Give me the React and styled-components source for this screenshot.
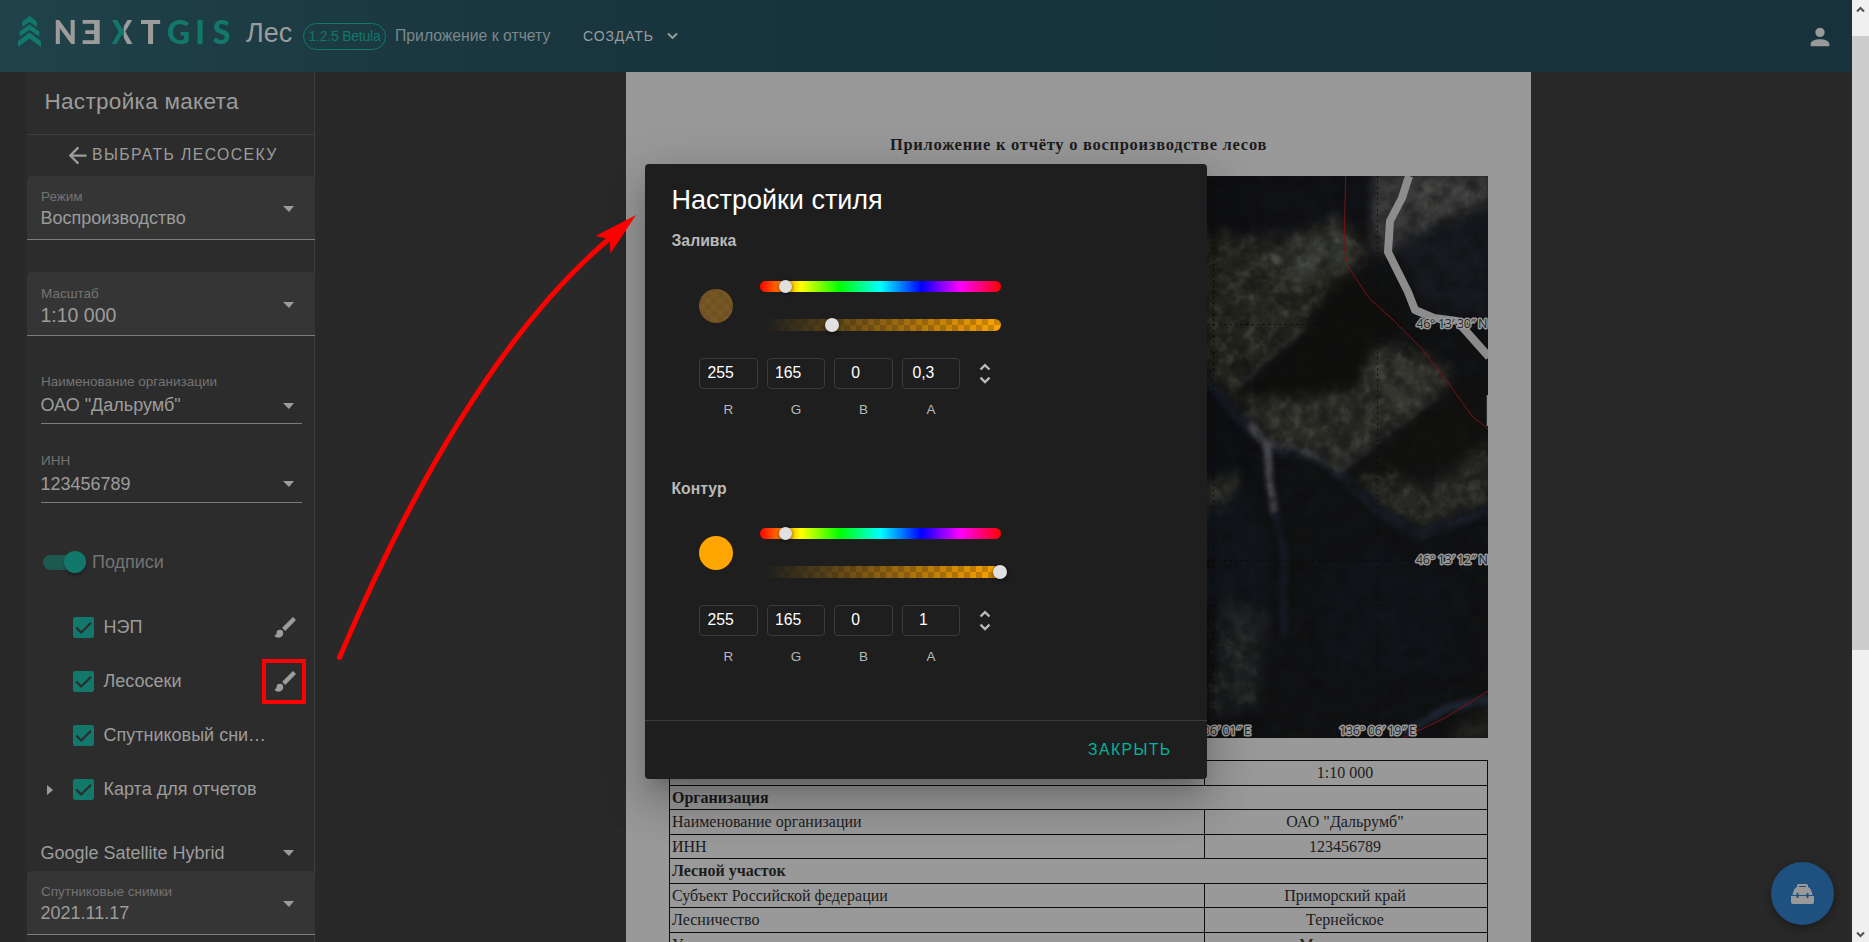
import React from 'react';
import styled, { createGlobalStyle } from 'styled-components';

const c = {
  teal: '#11786b',
  text: '#9c9c9c',
  muted: '#737373',
  bg: '#292929',
  panel: '#2c2c2c',
  line: '#3d3d3d',
  dialog: '#1e1e1e',
};

const GlobalStyle = createGlobalStyle`
  * { box-sizing: border-box; }
  body { margin: 0; overflow: hidden; background: ${c.bg}; font-family: "Liberation Sans", Arial, sans-serif; }
`;

const Window = styled.div`
  position: relative;
  display: flex;
  width: 1869px;
  height: 942px;
  overflow: hidden;
`;
const Main = styled.div`
  flex: 1;
  display: flex;
  flex-direction: column;
  min-width: 0;
`;

/* App bar */
const Bar = styled.header`
  flex: none;
  height: 72px;
  display: flex;
  align-items: flex-start;
  background: linear-gradient(90deg, #204249 0, #1b3840 420px, #16323a 900px, #17323a 100%);
`;
const LogoMark = styled.svg`
  flex: none;
  width: 23px;
  height: 31px;
  margin: 16px 0 0 18px;
`;
const Wordmark = styled.div`
  display: flex;
  margin: 11px 0 0 12px;
  height: 41px;
  font: 900 32px/41px Lato, sans-serif;
`;
const Letter = styled.span`
  display: block;
  width: ${(p) => p.$w}px;
  text-align: center;
  color: ${(p) => p.$color};
  transform: scaleX(${(p) => p.$sx || 1});
  ${(p) => p.$split && `
    background: linear-gradient(90deg, ${c.teal} 58%, ${c.text} 58%);
    background-clip: text;
    -webkit-background-clip: text;
    color: transparent;
  `}
`;
const Product = styled.div`
  margin: 13px 0 0 11px;
  width: 46px;
  font-size: 27px;
  line-height: 40px;
  color: ${c.text};
`;
const Version = styled.div`
  margin: 23px 0 0 11px;
  width: 83px;
  height: 27px;
  border: 1px solid ${c.teal};
  border-radius: 14px;
  font-size: 14px;
  letter-spacing: -0.22px;
  line-height: 24px;
  text-align: center;
  color: ${c.teal};
`;
const Subtitle = styled.div`
  margin: 23px 0 0 9px;
  width: 156px;
  white-space: nowrap;
  font-size: 15.75px;
  line-height: 26px;
  color: #7c888b;
`;
const BarButton = styled.div`
  display: flex;
  align-items: center;
  margin: 23px 0 0 32px;
  height: 26px;
  gap: 13px;
  font-size: 14px;
  letter-spacing: 0.9px;
  color: ${c.text};
`;
const Account = styled.svg`
  width: 28px;
  height: 28px;
  margin: 22.5px 18px 0 auto;
  fill: #999;
`;

/* Body */
const Body = styled.div`
  flex: 1;
  display: flex;
  min-height: 0;
`;
const Side = styled.aside`
  flex: none;
  width: 288px;
  margin-left: 27px;
  display: flex;
  flex-direction: column;
  background: ${c.panel};
  border-right: 1px solid ${c.line};
`;
const SideTitle = styled.div`
  flex: none;
  height: 63px;
  padding: 0 0 1px 17.5px;
  border-bottom: 1px solid ${c.line};
  font-size: 22.5px;
  line-height: 60px;
  letter-spacing: 0.3px;
  color: ${c.text};
`;
const BackButton = styled.div`
  flex: none;
  height: 41px;
  display: flex;
  align-items: center;
  padding: 0 0 2px 37px;
  font-size: 15.75px;
  letter-spacing: 1.4px;
  color: ${c.text};
  svg { width: 27px; height: 27px; margin: 2px 1px 0 0; fill: currentColor; }
`;
const FieldBox = styled.div`
  flex: none;
  position: relative;
  height: ${(p) => (p.$filled ? 64 : p.$bare ? 31 : 63)}px;
  margin: ${(p) => p.$mt || 0}px ${(p) => (p.$filled ? -1 : 12)}px 0 ${(p) => (p.$filled ? 0 : 14)}px;
  padding: ${(p) => (p.$bare ? 0 : 12 + (p.$drop || 0))}px 0 0 ${(p) => (p.$filled ? 14 : 0)}px;
  background: ${(p) => (p.$filled ? '#353535' : 'transparent')};
  border-radius: ${(p) => (p.$filled ? '4px 4px 0 0' : 0)};
  border-bottom: 1px solid #7c7c7c;
`;
const FieldLabel = styled.div`
  height: ${(p) => (p.$filled ? 18 : 20)}px;
  font-size: 13.5px;
  line-height: 18px;
  color: ${c.muted};
`;
const FieldValue = styled.div`
  margin-left: -0.5px;
  font-size: ${(p) => p.$size || 18}px;
  line-height: 24px;
  white-space: nowrap;
  color: ${c.text};
`;
const Caret = styled.i`
  position: absolute;
  right: ${(p) => (p.$filled ? 21 : 8)}px;
  top: ${(p) => p.$y}px;
  border: solid transparent;
  border-width: 6px 5.5px 0 6px;
  border-top-color: ${c.text};
`;
const SwitchRow = styled.div`
  flex: none;
  display: flex;
  align-items: center;
  height: 46px;
  margin: 36px 0 16px;
  padding-left: 16px;
  gap: 12px;
  font-size: 18px;
  color: ${c.muted};
`;
const Track = styled.div`
  display: flex;
  align-items: center;
  justify-content: flex-end;
  width: 37px;
  height: 15px;
  background: #1d5951;
  border-radius: 8px;
`;
const Thumb = styled.div`
  flex: none;
  width: 22px;
  height: 22px;
  margin-right: -6px;
  border-radius: 50%;
  background: ${c.teal};
  box-shadow: 0 3px 3px rgba(0, 0, 0, 0.25);
`;
const TreeRow = styled.div`
  flex: none;
  display: flex;
  align-items: center;
  height: 54px;
  padding-left: 20px;
  color: ${c.text};
`;
const Expander = styled.div`
  width: 26px;
  &::before {
    content: '';
    display: block;
    width: 0;
    border: solid transparent;
    border-width: 5.5px 0 5.5px 6px;
    border-left-color: ${(p) => (p.$shown ? c.text : 'transparent')};
  }
`;
const Check = styled.svg`
  width: 21px;
  height: 21px;
  margin-bottom: 1px;
`;
const TreeLabel = styled.div`
  margin-left: 9.5px;
  width: 166.5px;
  padding-bottom: 3px;
  font-size: 18px;
  line-height: 24px;
  white-space: nowrap;
`;
const BrushSlot = styled.div`
  width: 44px;
  height: 45px;
  display: flex;
  align-items: center;
  justify-content: center;
  margin: -2px 0 0 -8px;
  border: 4px solid ${(p) => (p.$marked ? '#f00' : 'transparent')};
  svg { flex: none; width: 27px; height: 27px; margin-left: 2px; fill: ${c.text}; }
`;

/* Report sheet */
const Stage = styled.main`
  flex: 1;
  padding-left: 311px;
  overflow: hidden;
`;
const Sheet = styled.article`
  width: 905px;
  height: 1200px;
  padding: 0 43px;
  background: #999;
  color: #1c1c1c;
  font-family: "Liberation Serif", "Times New Roman", serif;
`;
const SheetTitle = styled.h1`
  margin: 0;
  height: 104px;
  padding-top: 61px;
  font-size: 16.5px;
  line-height: 24px;
  letter-spacing: 0.72px;
  text-align: center;
`;
const Map = styled.svg`
  display: block;
  width: 819px;
  height: 562px;
`;
const Table = styled.div`
  margin-top: 22px;
  border: 1px solid #0c0c0c;
  border-bottom: 0;
`;
const TRow = styled.div`
  display: flex;
  height: 24.57px;
  border-bottom: 1px solid #0c0c0c;
  font-size: 16px;
  line-height: ${(p) => (p.$head ? 24.2 : 23.5)}px;
  font-weight: ${(p) => (p.$head ? 700 : 400)};
`;
const Cell = styled.div`
  flex: 1;
  padding-left: 2px;
`;
const ValueCell = styled.div`
  width: 283px;
  padding-right: 2px;
  border-left: 1px solid #0c0c0c;
  text-align: center;
`;

/* Scrollbar */
const Scroll = styled.div`
  flex: none;
  width: 17px;
  display: flex;
  flex-direction: column;
  align-items: center;
  background: #f0f0f0;
`;
const ScrollArrow = styled.svg`
  flex: none;
  width: 9px;
  height: 7px;
  margin: ${(p) => (p.$down ? '0 0 4px' : '6px 0 0')};
`;
const ScrollThumb = styled.div`
  width: 17px;
  height: 614px;
  margin: 23px 0 auto;
  background: #cdcdcd;
`;

/* Dialog */
const Dialog = styled.section`
  position: absolute;
  left: 645px;
  top: 164px;
  width: 562px;
  height: 615px;
  display: flex;
  flex-direction: column;
  border-radius: 4px;
  background: ${c.dialog};
  box-shadow: 0 12px 17px -8px rgba(0, 0, 0, 0.2), 0 27px 43px 3px rgba(0, 0, 0, 0.14), 0 10px 52px 9px rgba(0, 0, 0, 0.12);
`;
const DialogTitle = styled.h2`
  margin: 0;
  padding: 18px 0 0 26.5px;
  height: 63px;
  font-size: 27px;
  line-height: 36px;
  font-weight: 400;
  color: #fff;
`;
const Section = styled.div`
  height: ${(p) => p.$h}px;
  padding-left: 27px;
`;
const SectionTitle = styled.div`
  height: 54px;
  margin-left: -0.5px;
  padding-top: ${(p) => p.$drop || 0}px;
  font-size: 15.75px;
  line-height: 28px;
  font-weight: 700;
  color: #b9b9b9;
`;
const PickerTop = styled.div`
  display: flex;
  align-items: flex-start;
  height: 77px;
  padding-left: 27px;
`;
const Swatch = styled.div`
  width: 34px;
  height: 34px;
  margin: 8px 27px 0 0;
  border-radius: 50%;
  background: ${(p) => (p.$alpha < 1
    ? 'repeating-conic-gradient(#6f5122 0 25%, #765725 0 50%) 0 3px / 12px 12px'
    : '#ffa500')};
`;
const Sliders = styled.div`
  display: flex;
  flex-direction: column;
  gap: 27px;
`;
const Slider = styled.div`
  position: relative;
  width: 241px;
  height: ${(p) => (p.$hue ? 11 : 12)}px;
  border-radius: 6px;
  background: ${(p) => (p.$hue
    ? 'linear-gradient(90deg, #f00, #ff0 17%, #0f0 33%, #0ff 50%, #00f 67%, #f0f 83%, #f00)'
    : `linear-gradient(90deg, ${c.dialog} 2%, rgba(255,165,0,0) 100%), repeating-conic-gradient(#cf8704 0 25%, #ffa500 0 50%) 0 0 / 12px 12px`)};
`;
const Knob = styled.div`
  position: absolute;
  top: -1px;
  left: ${(p) => p.$x}px;
  width: ${(p) => (p.$hue ? 13 : 14)}px;
  height: ${(p) => (p.$hue ? 13 : 14)}px;
  margin-left: -7px;
  border-radius: 50%;
  background: #e0e0e0;
  box-shadow: 0 1px 4px rgba(0, 0, 0, 0.6);
`;
const Channels = styled.div`
  display: flex;
  padding-left: 27px;
  gap: 9px;
`;
const Channel = styled.label`
  width: 58.6px;
  text-align: center;
  font-size: 13.5px;
  line-height: 16px;
  color: #b9b9b9;
`;
const ChannelInput = styled.div`
  height: 31px;
  margin-bottom: 13px;
  padding-right: 15.5px;
  border: 1px solid #3b3b3b;
  border-radius: 4px;
  font-size: 15.75px;
  line-height: 27px;
  color: #fff;
`;
const Stepper = styled.svg`
  width: 12px;
  height: 23px;
  margin: 4px 0 0 9.5px;
`;
const Actions = styled.footer`
  margin-top: auto;
  height: 59px;
  padding: 16px 35.5px 0 0;
  border-top: 1px solid #3b3b3b;
  text-align: right;
  font-size: 15.75px;
  line-height: 26px;
  letter-spacing: 1.4px;
  color: #04b29e;
`;

const Fab = styled.button`
  position: absolute;
  left: 1771px;
  top: 862px;
  width: 63px;
  height: 63px;
  display: flex;
  align-items: center;
  justify-content: center;
  padding: 0;
  border: 0;
  border-radius: 50%;
  background: #1e5080;
  box-shadow: 0 4px 6px rgba(0, 0, 0, 0.22), 0 1px 18px rgba(0, 0, 0, 0.16);
  svg { width: 23px; height: 20px; }
`;
const Pointer = styled.svg`
  position: absolute;
  left: 330px;
  top: 205px;
  width: 320px;
  height: 460px;
  pointer-events: none;
`;

function Field({ label, value, filled, bare, mt, size, drop, caret }) {
  return (
    <FieldBox $filled={filled} $bare={bare} $mt={mt} $drop={drop}>
      {label && <FieldLabel $filled={filled}>{label}</FieldLabel>}
      <FieldValue $size={size}>{value}</FieldValue>
      <Caret $filled={filled} $y={caret} />
    </FieldBox>
  );
}

function TreeItem({ label, brush, marked, expandable }) {
  return (
    <TreeRow>
      <Expander $shown={expandable} />
      <Check viewBox="0 0 21 21">
        <rect width="21" height="21" rx="2.2" fill={c.teal} />
        <path d="M3.3 10.6 8.2 15.5 18 5.8" fill="none" stroke={c.panel} strokeWidth="2.2" />
      </Check>
      <TreeLabel>{label}</TreeLabel>
      {brush && (
        <BrushSlot $marked={marked}>
          <svg viewBox="0 0 24 24">
            <path d="M20.71 4.63 19.37 3.29C19 2.9 18.35 2.9 17.96 3.29L9 12.25 11.75 15 20.71 6.04C21.1 5.65 21.1 5 20.71 4.63M7 14A3 3 0 0 0 4 17C4 18.31 2.84 19 2 19 2.92 20.22 4.5 21 6 21A4 4 0 0 0 10 17 3 3 0 0 0 7 14Z" />
          </svg>
        </BrushSlot>
      )}
    </TreeRow>
  );
}

function ColorPicker({ title, values, height, alpha, drop }) {
  return (
    <Section $h={height}>
      <SectionTitle $drop={drop}>{title}</SectionTitle>
      <PickerTop>
        <Swatch $alpha={alpha} />
        <Sliders>
          <Slider $hue><Knob $hue $x={26} /></Slider>
          <Slider><Knob $x={alpha < 1 ? 72 : 240} /></Slider>
        </Sliders>
      </PickerTop>
      <Channels>
        {['R', 'G', 'B', 'A'].map((name, i) => (
          <Channel key={name}>
            <ChannelInput>{values[i]}</ChannelInput>
            {name}
          </Channel>
        ))}
        <Stepper viewBox="0 0 12 23" fill="none" stroke="#b9b9b9" strokeWidth="2.4">
          <path d="M1.5 7.5 6 3.2 10.5 7.5M1.5 15.7 6 20 10.5 15.7" />
        </Stepper>
      </Channels>
    </Section>
  );
}

const halo = {
  fill: '#262626', stroke: '#999', strokeWidth: 3, strokeLinejoin: 'round', paintOrder: 'stroke',
  fontFamily: '"Open Sans", sans-serif', fontSize: 12.5,
};

function SatelliteMap() {
  return (
    <Map viewBox="0 0 819 562">
      <defs>
        <filter id="soft" x="-20%" y="-20%" width="140%" height="140%" colorInterpolationFilters="sRGB"><feGaussianBlur stdDeviation="15" /></filter>
        <filter id="edge" x="-20%" y="-20%" width="140%" height="140%" colorInterpolationFilters="sRGB"><feGaussianBlur stdDeviation="6" /></filter>
        <filter id="grain" x="0" y="0" width="100%" height="100%" colorInterpolationFilters="sRGB">
          <feTurbulence type="fractalNoise" baseFrequency="0.085" numOctaves="3" seed="8" />
          <feColorMatrix values="0 0 0 0 .38  0 0 0 0 .39  0 0 0 0 .35  2.2 0 0 0 -.95" />
        </filter>
        <filter id="shade" x="0" y="0" width="100%" height="100%" colorInterpolationFilters="sRGB">
          <feTurbulence type="fractalNoise" baseFrequency="0.06" numOctaves="3" seed="21" />
          <feColorMatrix values="0 0 0 0 .05  0 0 0 0 .05  0 0 0 0 .05  2.4 0 0 0 -1" />
        </filter>
        <mask id="ridges">
          <g transform="matrix(.3333 0 0 .4464 521 -116)" filter="url(#soft)" fill="#fff">
            <path d="M40 390 200 400 340 390 450 350 540 440 400 520 350 590 240 660 120 750 40 700Z" opacity=".8" />
            <path d="M120 755 300 760 500 740 540 650 640 640 790 700 740 750 600 830 450 920 380 890 230 850Z" opacity=".8" />
            <path d="M490 930 580 910 720 960 900 850 900 1000 700 1045 570 990Z" opacity=".7" />
            <path d="M670 250H900V320L720 370 660 400Z" opacity=".8" />
            <path d="M40 960 140 930 120 1000 40 1020ZM60 1250 220 1260 200 1440 60 1470Z" opacity=".5" />
          </g>
          <rect width="819" height="562" fill="#fff" opacity=".06" />
        </mask>
      </defs>
      <rect width="819" height="562" fill="#101113" />
      <g transform="matrix(.3333 0 0 .4464 521 -116)">
        <g filter="url(#soft)">
          <path d="M40 250H560V360L300 400 40 360Z" fill="#101115" />
          <path d="M40 390 200 400 340 390 450 350 540 440 400 520 350 590 240 660 120 750 40 700Z" fill="#25261f" />
          <path d="M290 420 440 380 520 430 380 480 300 500Z" fill="#373a35" />
          <path d="M130 750 350 600 420 520 480 480 640 560 620 620 530 650 500 740 300 760Z" fill="#0f100e" />
          <path d="M120 755 300 760 500 740 540 650 640 640 790 700 740 750 600 830 450 920 380 890 230 850Z" fill="#2a2a25" />
          <path d="M560 690 650 680 780 710 620 820Z" fill="#35362f" />
          <path d="M500 930 700 780 890 730V850L760 920 640 920Z" fill="#11120f" />
          <path d="M490 940 620 930 720 960 900 850 900 1000 700 1045 570 1000Z" fill="#272723" />
          <path d="M550 250H900V320L720 370 600 430 540 420Z" fill="#3a3b3a" />
          <path d="M620 410 900 330V580L700 550 640 460Z" fill="#17191f" />
          <path d="M40 740 160 840 170 930 40 940Z" fill="#0f1216" />
          <path d="M40 950 150 920 120 1000 40 1020Z" fill="#33352f" />
          <path d="M40 1010 170 960 240 1100 200 1260 40 1250Z" fill="#13171d" />
          <path d="M90 1200 240 1240 200 1450 60 1470Z" fill="#1e2022" />
          <path d="M380 1150 560 1080 850 1200 750 1380 400 1400Z" fill="#101318" />
          <path d="M800 1500 900 1440V1530H760Z" fill="#24251f" />
        </g>
        <g fill="none" filter="url(#edge)">
          <path d="M40 710 170 820 240 870 380 885 450 930 570 1010 690 1065 900 1005" stroke="#171b23" strokeWidth="26" />
          <path d="M120 745 240 665 350 595M450 920 600 830 740 755" stroke="#303333" strokeWidth="8" />
          <path d="M180 815 230 860 300 865 380 888 450 918" stroke="#393a39" strokeWidth="12" />
          <path d="M180 815 232 865 240 950 255 1020" stroke="#4a4b50" strokeWidth="22" />
          <path d="M255 1010 282 1100 280 1290" stroke="#151922" strokeWidth="24" />
          <path d="M640 1510 760 1455 900 1430" stroke="#1d2531" strokeWidth="20" />
          <path d="M240 435 272 455" stroke="#646461" strokeWidth="14" />
        </g>
      </g>
      <rect width="819" height="562" filter="url(#grain)" mask="url(#ridges)" opacity=".6" />
      <rect width="819" height="562" filter="url(#shade)" opacity=".5" />
      <path d="M740 0 733 22 721 45 719 76 729 96 739 116 746 134 765 142 788 145 804 163 820 181" fill="none" stroke="#8c8c8c" strokeWidth="8" strokeLinejoin="round" />
      <path d="M818.5 219V250" stroke="#919191" strokeWidth="1.5" />
      <g stroke="#060606" strokeWidth="1" strokeDasharray="1.5 4" fill="none">
        <path d="M544.5 0V562M708.5 0V562M0 148.5H819M0 384.5H819" />
      </g>
      <path d="M676.7 0 675 71 679 90 700 122 721 141 753 173 780 208 803 240 819 253M819 515 776 542 734 562" fill="none" stroke="#7a1114" />
      <g {...halo}>
        <text x="747.5" y="152" textLength="71">46° 13′ 30″ N</text>
        <text x="747" y="388" textLength="72">46° 13′ 12″ N</text>
        <text x="505" y="559" textLength="77">136° 06′ 01″ E</text>
        <text x="670" y="559" textLength="77">136° 06′ 19″ E</text>
      </g>
    </Map>
  );
}

const rows = [
  ['Масштаб', '1:10 000'],
  ['Организация'],
  ['Наименование организации', 'ОАО "Дальрумб"'],
  ['ИНН', '123456789'],
  ['Лесной участок'],
  ['Субъект Российской федерации', 'Приморский край'],
  ['Лесничество', 'Тернейское'],
  ['Участковое лесничество', 'Малокемское'],
];

export default function App() {
  return (
    <Window>
      <GlobalStyle />
      <Main>
        <Bar>
          <LogoMark viewBox="0 0 23 31" fill={c.teal}>
            <path d="M11.500 0 18.800 5.500V11L11.500 6 4.200 11V5.500Z" />
            <path d="M11.500 8.500 21.300 15.500V20.500L11.500 14 1.700 20.500V15.500Z" />
            <path d="M11.500 16.500 23 25V31L11.500 22.500 0 31V25Z" />
          </LogoMark>
          <Wordmark>
            <Letter $w={23} $color={c.text} $sx={0.95}>N</Letter>
            <Letter $w={32} $color={c.text} $sx={-1.15}>E</Letter>
            <Letter $w={28} $sx={0.95} $split>X</Letter>
            <Letter $w={29} $color={c.text} $sx={1.04}>T</Letter>
            <Letter $w={27} $color={c.teal}>G</Letter>
            <Letter $w={16} $color={c.teal}>I</Letter>
            <Letter $w={27} $color={c.teal}>S</Letter>
          </Wordmark>
          <Product>Лес</Product>
          <Version>1.2.5 Betula</Version>
          <Subtitle>Приложение к отчету</Subtitle>
          <BarButton>
            СОЗДАТЬ
            <svg width="11" height="8" viewBox="0 0 11 8" fill="none" stroke={c.text} strokeWidth="1.9">
              <path d="M1 1.500 5.500 6 10 1.500" />
            </svg>
          </BarButton>
          <Account viewBox="0 0 24 24">
            <path d="M12 4a4 4 0 1 1 0 8 4 4 0 0 1 0-8m0 10c4.420 0 8 1.790 8 4v2H4v-2c0-2.210 3.580-4 8-4" />
          </Account>
        </Bar>
        <Body>
          <Side>
            <SideTitle>Настройка макета</SideTitle>
            <BackButton>
              <svg viewBox="0 0 24 24"><path d="M20 11v2H8l5.500 5.500-1.420 1.420L4.160 12l7.920-7.920L13.500 5.500 8 11z" /></svg>
              ВЫБРАТЬ ЛЕСОСЕКУ
            </BackButton>
            <Field filled label="Режим" value="Воспроизводство" caret={30} />
            <Field filled mt={32} drop={1} size={19.5} label="Масштаб" value="1:10 000" caret={30} />
            <Field mt={25} label="Наименование организации" value={'ОАО "Дальрумб"'} caret={42} />
            <Field mt={16} label="ИНН" value="123456789" caret={41} />
            <SwitchRow><Track><Thumb /></Track>Подписи</SwitchRow>
            <TreeItem label="НЭП" brush />
            <TreeItem label="Лесосеки" brush marked />
            <TreeItem label="Спутниковый сни…" />
            <TreeItem label="Карта для отчетов" expandable />
            <Field bare mt={24} value="Google Satellite Hybrid" caret={9} />
            <Field filled mt={-1} label="Спутниковые снимки" value="2021.11.17" caret={30} />
          </Side>
          <Stage>
            <Sheet>
              <SheetTitle>Приложение к отчёту о воспроизводстве лесов</SheetTitle>
              <SatelliteMap />
              <Table>
                {rows.map(([name, value]) => (
                  <TRow key={name} $head={!value}>
                    <Cell>{name}</Cell>
                    {value && <ValueCell>{value}</ValueCell>}
                  </TRow>
                ))}
              </Table>
            </Sheet>
          </Stage>
        </Body>
      </Main>
      <Scroll>
        <ScrollArrow viewBox="0 0 9 7" fill="none" stroke="#505050" strokeWidth="2"><path d="M1 5.500 4.500 2 8 5.500" /></ScrollArrow>
        <ScrollThumb />
        <ScrollArrow $down viewBox="0 0 9 7" fill="none" stroke="#505050" strokeWidth="2"><path d="M1 1.500 4.500 5 8 1.500" /></ScrollArrow>
      </Scroll>
      <Fab aria-label="Инструменты">
        <svg viewBox="0 0 23 20" fill="#999">
          <path d="M7.500 0H15.500Q17 0 17 1.500V3Q20 3.500 21.500 11H17.500V9H15.500V11H7.500V9H5.500V11H1.500Q3 3.500 6 3V1.500Q6 0 7.500 0M8 2V3H15V2Z" fillRule="evenodd" />
          <path d="M0 12H5.500V14H7.500V12H15.500V14H17.500V12H23V18Q23 20 21 20H2Q0 20 0 18Z" />
        </svg>
      </Fab>
      <Dialog>
        <DialogTitle>Настройки стиля</DialogTitle>
        <ColorPicker title="Заливка" height={247} alpha={0.3} values={['255', '165', '0', '0,3']} />
        <ColorPicker title="Контур" drop={1} height={240} alpha={1} values={['255', '165', '0', '1']} />
        <Actions>ЗАКРЫТЬ</Actions>
      </Dialog>
      <Pointer viewBox="330 205 320 460">
        <path d="M339.500 657.500Q466 360 609 239" fill="none" stroke="#f00" strokeWidth="5" strokeLinecap="round" />
        <path d="M636 215 610.500 253.500 609.500 241.500 606.500 238.500 595.500 236Z" fill="#f00" />
      </Pointer>
    </Window>
  );
}
